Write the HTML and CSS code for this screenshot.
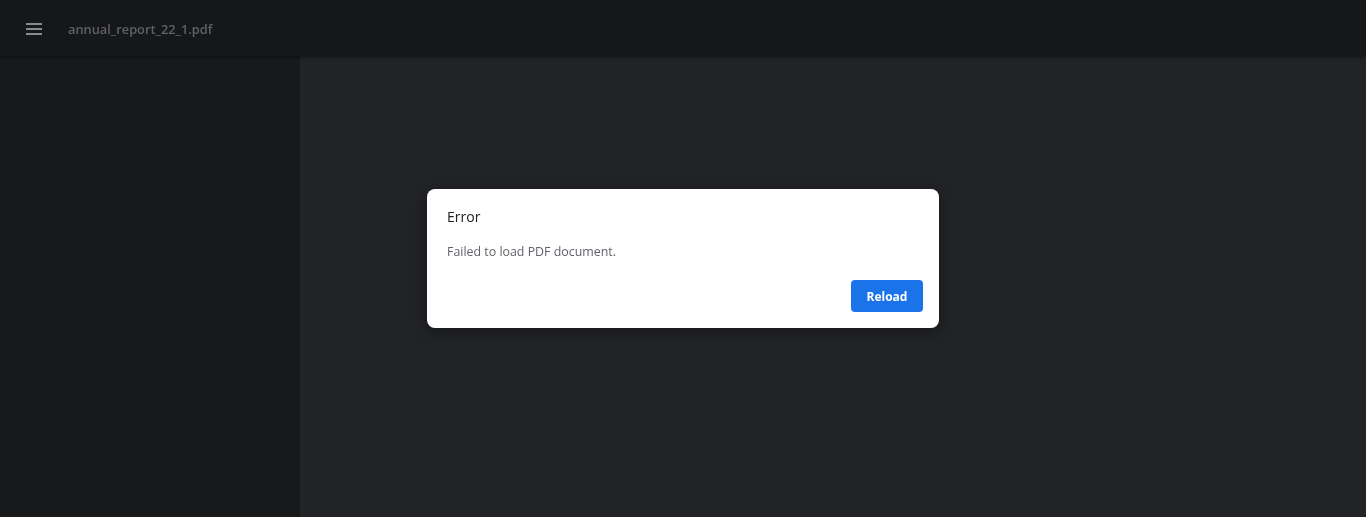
FILE: index.html
```html
<!DOCTYPE html>
<html lang="en">
<head>
<meta charset="utf-8">
<title>annual_report_22_1.pdf</title>
<link rel="stylesheet" href="styles.css">
</head>
<body>
<div class="app">
  <header class="toolbar">
    <button class="menu-btn" aria-label="Menu">
      <svg width="16" height="12" viewBox="0 0 16 12"><rect x="0" y="0" width="16" height="2" fill="#8a8b8d"/><rect x="0" y="5" width="16" height="2" fill="#8a8b8d"/><rect x="0" y="10" width="16" height="2" fill="#8a8b8d"/></svg>
    </button>
    <span class="title">annual_report_22_1.pdf</span>
  </header>
  <div class="content">
    <aside class="sidebar"></aside>
    <main class="viewer"></main>
  </div>
</div>
<div class="overlay">
  <div class="dialog" role="dialog">
    <div class="dialog-title">Error</div>
    <div class="dialog-body">Failed to load PDF document.</div>
    <div class="dialog-actions">
      <button class="reload">Reload</button>
    </div>
  </div>
</div>
</body>
</html>
```
FILE: styles.css
```css
* { box-sizing: border-box; }
html, body { margin: 0; height: 100%; }
body {
  font-family: "Open Sans", "Noto Sans", sans-serif;
  background: #222326;
  overflow: hidden;
}
.app { display: flex; flex-direction: column; height: 100vh; }
.toolbar {
  height: 56px;
  flex: none;
  background: #161719;
  display: flex;
  align-items: center;
  padding-left: 26px;
  padding-top: 1px;
  box-shadow: 0 1px 3px rgba(0,0,0,0.5);
  position: relative;
  z-index: 1;
}
.menu-btn {
  background: none; border: 0; padding: 0; margin: 0;
  width: 16px; height: 12px; display: flex;
}
.title {
  margin-left: 26px;
  color: #606165;
  font-size: 12.8px;
  font-weight: 600;
}
.content { flex: 1; display: flex; }
.sidebar { width: 300px; background: #18191b; }
.viewer { flex: 1; background: #222326; }
.overlay {
  position: fixed; inset: 0;
  display: flex; align-items: center; justify-content: center;
}
.dialog {
  width: 512px;
  height: 139px;
  background: #fff;
  border-radius: 8px;
  box-shadow: 0 4px 16px rgba(0,0,0,0.35);
  padding: 18px 16px 16px 20px;
  display: flex; flex-direction: column;
}
.dialog-title {
  font-size: 14px;
  color: #202124;
  line-height: 20px;
}
.dialog-body {
  margin-top: 17px;
  font-size: 12.4px;
  color: #5f6368;
  line-height: 16px;
}
.dialog-actions {
  margin-top: auto;
  display: flex; justify-content: flex-end;
}
.reload {
  width: 72px; height: 32px;
  background: #1a73e8;
  color: #fff;
  border: 0;
  border-radius: 4px;
  font-family: "Open Sans", "Noto Sans", sans-serif;
  font-size: 12px;
  font-weight: 700;
}
```
